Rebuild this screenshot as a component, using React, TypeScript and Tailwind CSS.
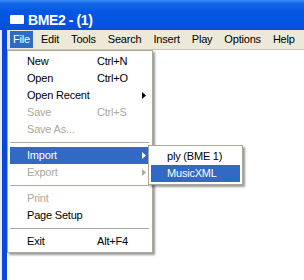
import React from "react";

const Arrow = ({ color }: { color: string }) => (
  <svg width="4" height="7" viewBox="0 0 4 7" className="ml-auto mr-[3px]">
    <polygon points="0,0 4,3.5 0,7" fill={color} />
  </svg>
);

type Item =
  | { sep: true }
  | { label: string; shortcut?: string; disabled?: boolean; sub?: boolean; active?: boolean; sep?: false };

const items: Item[] = [
  { label: "New", shortcut: "Ctrl+N" },
  { label: "Open", shortcut: "Ctrl+O" },
  { label: "Open Recent", sub: true },
  { label: "Save", shortcut: "Ctrl+S", disabled: true },
  { label: "Save As...", disabled: true },
  { sep: true },
  { label: "Import", sub: true, active: true },
  { label: "Export", sub: true, disabled: true },
  { sep: true },
  { label: "Print", disabled: true },
  { label: "Page Setup" },
  { sep: true },
  { label: "Exit", shortcut: "Alt+F4" },
];

export default function App() {
  return (
    <div className="w-[304px] h-[280px] relative overflow-hidden flex flex-col bg-white font-['Liberation_Sans',Arial,sans-serif] text-[11px] tracking-[-0.2px]">
      {/* Title bar */}
      <div className="h-[30px] shrink-0 flex items-center pl-[10px] pt-[9px] bg-[linear-gradient(to_bottom,#3b8cf6_0%,#1467e6_12%,#0456e4_40%,#0453e0_80%,#0a4ed4_100%)]">
        <div className="w-[14px] h-[9px] bg-white rounded-[1px]" />
        <span className="ml-[4px] text-white font-bold text-[14px] tracking-[-0.4px] leading-none">BME2 - (1)</span>
      </div>
      <div className="flex-1 flex flex-row">
        {/* left frame */}
        <div className="w-[7px] shrink-0 flex flex-row">
          <div className="w-[2px] bg-[#e6ecf8]" />
          <div className="w-[5px] bg-[#0a48d6]" />
        </div>
        <div className="flex-1 flex flex-col">
          {/* menu bar */}
          <div className="h-[20px] shrink-0 bg-[#ece9d8] flex items-center pl-[3px] border-b border-[#c9c6b8]">
            <div className="h-[17px] px-[3px] flex items-center bg-[#316ac5] text-white">File</div>
            <div className="ml-[8px]">Edit</div>
            <div className="ml-[12px]">Tools</div>
            <div className="ml-[12px]">Search</div>
            <div className="ml-[12px]">Insert</div>
            <div className="ml-[12px]">Play</div>
            <div className="ml-[12px]">Options</div>
            <div className="ml-[12px]">Help</div>
          </div>
          <div className="flex-1 bg-white" />
        </div>
      </div>

      {/* File dropdown */}
      <div className="absolute left-[7px] top-[50px] w-[146px] bg-white border border-[#aca899] pl-[2px] pr-[3px] py-[2px] shadow-[2px_2px_2px_rgba(0,0,0,0.4)] flex flex-col">
        {items.map((it, i) =>
          it.sep ? (
            <div key={i} className="h-[9px] flex items-center">
              <div className="w-full h-px bg-[#aca899]" />
            </div>
          ) : (
            <div
              key={i}
              className={
                "h-[17px] flex items-center pl-[17px] " +
                (it.active ? "bg-[#316ac5] text-white" : it.disabled ? "text-[#aca899]" : "text-black")
              }
            >
              <span className="w-[70px] shrink-0">{it.label}</span>
              {it.shortcut && <span>{it.shortcut}</span>}
              {it.sub && <Arrow color={it.active ? "#ffffff" : it.disabled ? "#aca899" : "#000000"} />}
            </div>
          )
        )}
      </div>

      {/* Import submenu */}
      <div className="absolute left-[148px] top-[145px] w-[95px] bg-white border border-[#aca899] px-[2px] py-[2px] shadow-[2px_2px_2px_rgba(0,0,0,0.4)] flex flex-col">
        <div className="h-[17px] flex items-center pl-[16px] text-black">ply (BME 1)</div>
        <div className="h-[17px] flex items-center pl-[16px] bg-[#316ac5] text-white">MusicXML</div>
      </div>
    </div>
  );
}
